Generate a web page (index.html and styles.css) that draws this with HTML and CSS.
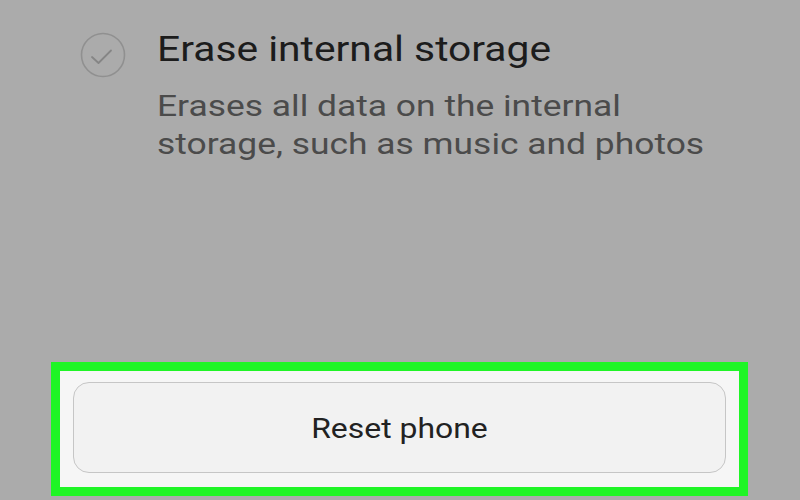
FILE: index.html
```html
<!DOCTYPE html>
<html>
<head>
<meta charset="utf-8">
<link rel="stylesheet" href="styles.css">
</head>
<body>
<div class="page">
  <div class="option">
    <svg class="check" width="46" height="46" viewBox="0 0 46 46">
      <circle cx="23" cy="23" r="21.5" fill="none" stroke="#909090" stroke-width="1.6"/>
      <polyline points="12,25 18.5,31 31,18.5" fill="none" stroke="#858585" stroke-width="1.8" stroke-linecap="round" stroke-linejoin="round"/>
    </svg>
    <div class="texts">
      <div class="title"><span class="wide wide-title">Erase internal storage</span></div>
      <div class="desc">
        <span class="wide wide-desc">Erases all data on the internal</span><br>
        <span class="wide wide-desc">storage, such as music and photos</span>
      </div>
    </div>
  </div>
  <div class="highlight">
    <div class="panel">
      <div class="button"><span class="wide wide-btn">Reset phone</span></div>
    </div>
  </div>
</div>
</body>
</html>
```
FILE: styles.css
```css
html, body {
  margin: 0;
  padding: 0;
}
body {
  background: #ababab;
  font-family: Roboto, "Noto Sans", sans-serif;
  width: 800px;
  height: 500px;
  overflow: hidden;
}
.page {
  display: flex;
  flex-direction: column;
}
.option {
  display: flex;
  align-items: flex-start;
  padding-left: 80px;
  padding-top: 30px;
  height: 362px;
  box-sizing: border-box;
}
.check {
  flex: none;
  margin-top: 2px;
}
.texts {
  margin-left: 31px;
}
.wide {
  display: inline-block;
  white-space: nowrap;
  transform-origin: left center;
}
.wide-title {
  transform: scaleX(1.165);
}
.wide-desc {
  transform: scaleX(1.18);
}
.wide-btn {
  transform: scaleX(1.14);
  transform-origin: center center;
}
.title {
  font-size: 35px;
  line-height: 40px;
  color: #1c1c1c;
}
.desc {
  margin-top: 17px;
  font-size: 30px;
  line-height: 37.5px;
  color: #4b4b4b;
}
.highlight {
  margin-left: 51px;
  width: 697px;
  height: 134px;
  box-sizing: border-box;
  border: 9px solid #1ff526;
}
.panel {
  background: #f6f6f6;
  height: 100%;
  box-sizing: border-box;
  padding: 11px 13px 14px 13px;
}
.button {
  height: 100%;
  box-sizing: border-box;
  border: 1.5px solid #c6c6c6;
  border-radius: 16px;
  background: #f2f2f2;
  display: flex;
  align-items: center;
  justify-content: center;
  font-size: 28px;
  color: #222;
  padding-top: 1px;
}
```
